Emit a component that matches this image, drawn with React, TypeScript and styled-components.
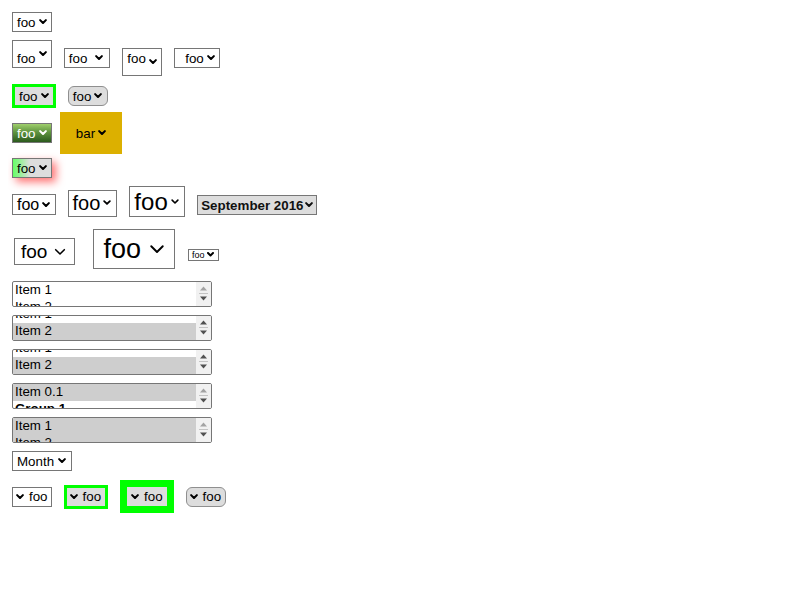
import React from 'react';
import styled, { createGlobalStyle } from 'styled-components';

const Global = createGlobalStyle`
  body {
    margin: 8px;
    background: #fff;
    font-family: "Liberation Sans", Arial, sans-serif;
    font-size: 13.333px;
    color: #000;
  }
`;

const Page = styled.div`
  display: flex;
  flex-direction: column;
  align-items: flex-start;
  padding: 4px;
`;

const Row = styled.div<{ $mt?: number; $align?: string; $gap?: number }>`
  display: flex;
  align-items: ${p => p.$align ?? 'baseline'};
  gap: ${p => p.$gap ?? 12}px;
  margin-top: ${p => p.$mt ?? 0}px;
`;

// a closed drop-down control
const Picker = styled.div<{ $fs?: number; $h?: number; $pl?: number; $pr?: number; $gap?: number; $ml?: number }>`
  display: inline-flex;
  align-items: center;
  flex-shrink: 0;
  box-sizing: border-box;
  height: ${p => p.$h ?? 20}px;
  padding: 0 ${p => p.$pr ?? 4.3}px 0 ${p => p.$pl ?? 4}px;
  margin-left: ${p => p.$ml ?? 0}px;
  gap: ${p => p.$gap ?? 3}px;
  border: 1px solid #767676;
  background: #fff;
  color: #000;
  font-size: ${p => p.$fs ?? 13.333}px;
  line-height: normal;
  white-space: nowrap;
`;

const LimePicker = styled(Picker)<{ $bw?: number }>`
  border: ${p => p.$bw ?? 3}px solid #00ff00;
  background: #dddddd;
`;

const RoundPicker = styled(Picker)`
  border-color: #8f8f8f;
  border-radius: 6px;
  background: #dddddd;
`;

const GradientPicker = styled(Picker)`
  background: linear-gradient(to bottom, #9fcf6c 0%, #5f9440 45%, #2b5a1d 100%);
  color: #fff;
`;

const BarPicker = styled(Picker)`
  border: none;
  background: #dcb000;
`;

const GlowPicker = styled(Picker)`
  background: linear-gradient(to right, #66ff66 0%, #dddddd 45%);
  box-shadow: 4px 4px 8px rgba(255, 0, 0, 0.55);
`;

const DatePicker = styled(Picker)`
  background: #dddddd;
  font-weight: bold;
  color: #111;
`;

const Label = styled.span<{ $pt?: number; $pb?: number }>`
  padding-top: ${p => p.$pt ?? 0}px;
  padding-bottom: ${p => p.$pb ?? 0}px;
`;

const ChevronSvg = styled.svg`
  display: block;
  flex-shrink: 0;
`;

const Chevron = ({ w = 8, sw = 2.6, color = 'currentColor' }: { w?: number; sw?: number; color?: string }) => (
  <ChevronSvg width={w} height={w * 0.66} viewBox="0 0 10 6.6">
    <polyline
      points="1.4,1.4 5,5 8.6,1.4"
      fill="none"
      stroke={color}
      strokeWidth={sw}
      strokeLinecap="round"
      strokeLinejoin="round"
    />
  </ChevronSvg>
);

// list box with a tiny scrollbar
const ListBox = styled.div`
  display: flex;
  box-sizing: border-box;
  width: 200px;
  height: 26px;
  border: 1px solid #767676;
  border-radius: 2px;
  background: #fff;
  overflow: hidden;
`;

const Viewport = styled.div`
  flex: 1;
  overflow: hidden;
`;

const Track = styled.div<{ $offset: number }>`
  margin-top: -${p => p.$offset}px;
`;

const OptRow = styled.div<{ $selected?: boolean; $group?: boolean }>`
  box-sizing: border-box;
  height: 17px;
  padding: 0 2px 1px;
  line-height: 16px;
  font-weight: ${p => (p.$group ? 'bold' : 'normal')};
  background: ${p => (p.$selected ? '#cecece' : 'transparent')};
  color: #000;
  white-space: nowrap;
`;

const Scrollbar = styled.div`
  width: 15px;
  flex-shrink: 0;
  background: #f1f1f1;
`;

const ArrowSvg = styled.svg`
  display: block;
`;

type Opt = { text: string; selected?: boolean; group?: boolean };
type ListData = { opts: Opt[]; offset: number; up: boolean; down: boolean };

const ON = '#505050';
const OFF = '#a3a3a3';

const lists: ListData[] = [
  { opts: [{ text: 'Item 1' }, { text: 'Item 2' }], offset: 0, up: false, down: true },
  { opts: [{ text: 'Item 1' }, { text: 'Item 2', selected: true }], offset: 10, up: true, down: true },
  { opts: [{ text: 'Item 1' }, { text: 'Item 2', selected: true }], offset: 10, up: true, down: true },
  {
    opts: [{ text: 'Item 0.1', selected: true }, { text: 'Group 1', group: true }, { text: 'Item 1' }],
    offset: 0,
    up: false,
    down: true,
  },
  { opts: [{ text: 'Item 1', selected: true }, { text: 'Item 2', selected: true }], offset: 0, up: false, down: true },
];

const List = ({ data }: { data: ListData }) => (
  <ListBox>
    <Viewport>
      <Track $offset={data.offset}>
        {data.opts.map((o, i) => (
          <OptRow key={i} $selected={o.selected} $group={o.group}>
            {o.text}
          </OptRow>
        ))}
      </Track>
    </Viewport>
    <Scrollbar>
      <ArrowSvg width="15" height="24" viewBox="0 0 15 24">
        <polygon points="4,8.5 11,8.5 7.5,4.5" fill={data.up ? ON : OFF} />
        <line x1="3" y1="11.5" x2="12" y2="11.5" stroke="#c4c4c4" strokeWidth="1" />
        <polygon points="4,14.5 11,14.5 7.5,18.5" fill={data.down ? ON : OFF} />
      </ArrowSvg>
    </Scrollbar>
  </ListBox>
);

const App = () => (
  <>
    <Global />
    <Page>
      <Row>
        <Picker><Label>foo</Label><Chevron /></Picker>
      </Row>

      <Row $mt={8}>
        <Picker $h={28}><Label $pt={8}>foo</Label><Chevron /></Picker>
        <Picker $gap={8} $pr={6}><Label>foo</Label><Chevron /></Picker>
        <Picker $h={28}><Label $pb={8}>foo</Label><Chevron /></Picker>
        <Picker $pl={10}><Label>foo</Label><Chevron /></Picker>
      </Row>

      <Row $mt={8} $align="center">
        <LimePicker $h={24}><Label>foo</Label><Chevron /></LimePicker>
        <RoundPicker $pr={5}><Label>foo</Label><Chevron /></RoundPicker>
      </Row>

      <Row $mt={4} $align="center" $gap={8}>
        <GradientPicker><Label>foo</Label><Chevron /></GradientPicker>
        <BarPicker $h={42} $pl={16} $pr={16}><Label>bar</Label><Chevron /></BarPicker>
      </Row>

      <Row $mt={4}>
        <GlowPicker><Label>foo</Label><Chevron /></GlowPicker>
      </Row>

      <Row $mt={8}>
        <Picker $fs={16} $h={21}><Label>foo</Label><Chevron /></Picker>
        <Picker $fs={20} $h={27} $pr={5}><Label>foo</Label><Chevron sw={2.2} /></Picker>
        <Picker $fs={24} $h={31} $pr={5.5}><Label>foo</Label><Chevron sw={2} /></Picker>
        <DatePicker $pl={3} $pr={3} $gap={2}><Label>September 2016</Label><Chevron /></DatePicker>
      </Row>

      <Row $mt={12} $gap={0}>
        <Picker $fs={19} $h={27} $pl={6} $pr={8} $gap={7} $ml={2}>
          <Label>foo</Label><Chevron w={12} sw={1.3} />
        </Picker>
        <Picker $fs={27} $h={40} $pl={9} $pr={9} $gap={8} $ml={18}>
          <Label>foo</Label><Chevron w={16} sw={1.2} />
        </Picker>
        <Picker $fs={9} $h={12} $pl={3} $pr={4} $gap={3} $ml={13}>
          <Label>foo</Label><Chevron w={7} sw={2.8} />
        </Picker>
      </Row>

      {lists.map((l, i) => (
        <Row key={i} $mt={i === 0 ? 12 : 8}>
          <List data={l} />
        </Row>
      ))}

      <Row $mt={8}>
        <Picker $gap={4} $pr={5}><Label>Month</Label><Chevron /></Picker>
      </Row>

      <Row $mt={9} $align="center">
        <Picker $pl={3} $pr={3} $gap={5}><Chevron /><Label>foo</Label></Picker>
        <LimePicker $h={24} $pl={3} $pr={4} $gap={5}><Chevron /><Label>foo</Label></LimePicker>
        <LimePicker $bw={7} $h={33} $pl={4} $pr={4} $gap={5}><Chevron /><Label>foo</Label></LimePicker>
        <RoundPicker $pl={3} $pr={4} $gap={5}><Chevron /><Label>foo</Label></RoundPicker>
      </Row>
    </Page>
  </>
);

export default App;
